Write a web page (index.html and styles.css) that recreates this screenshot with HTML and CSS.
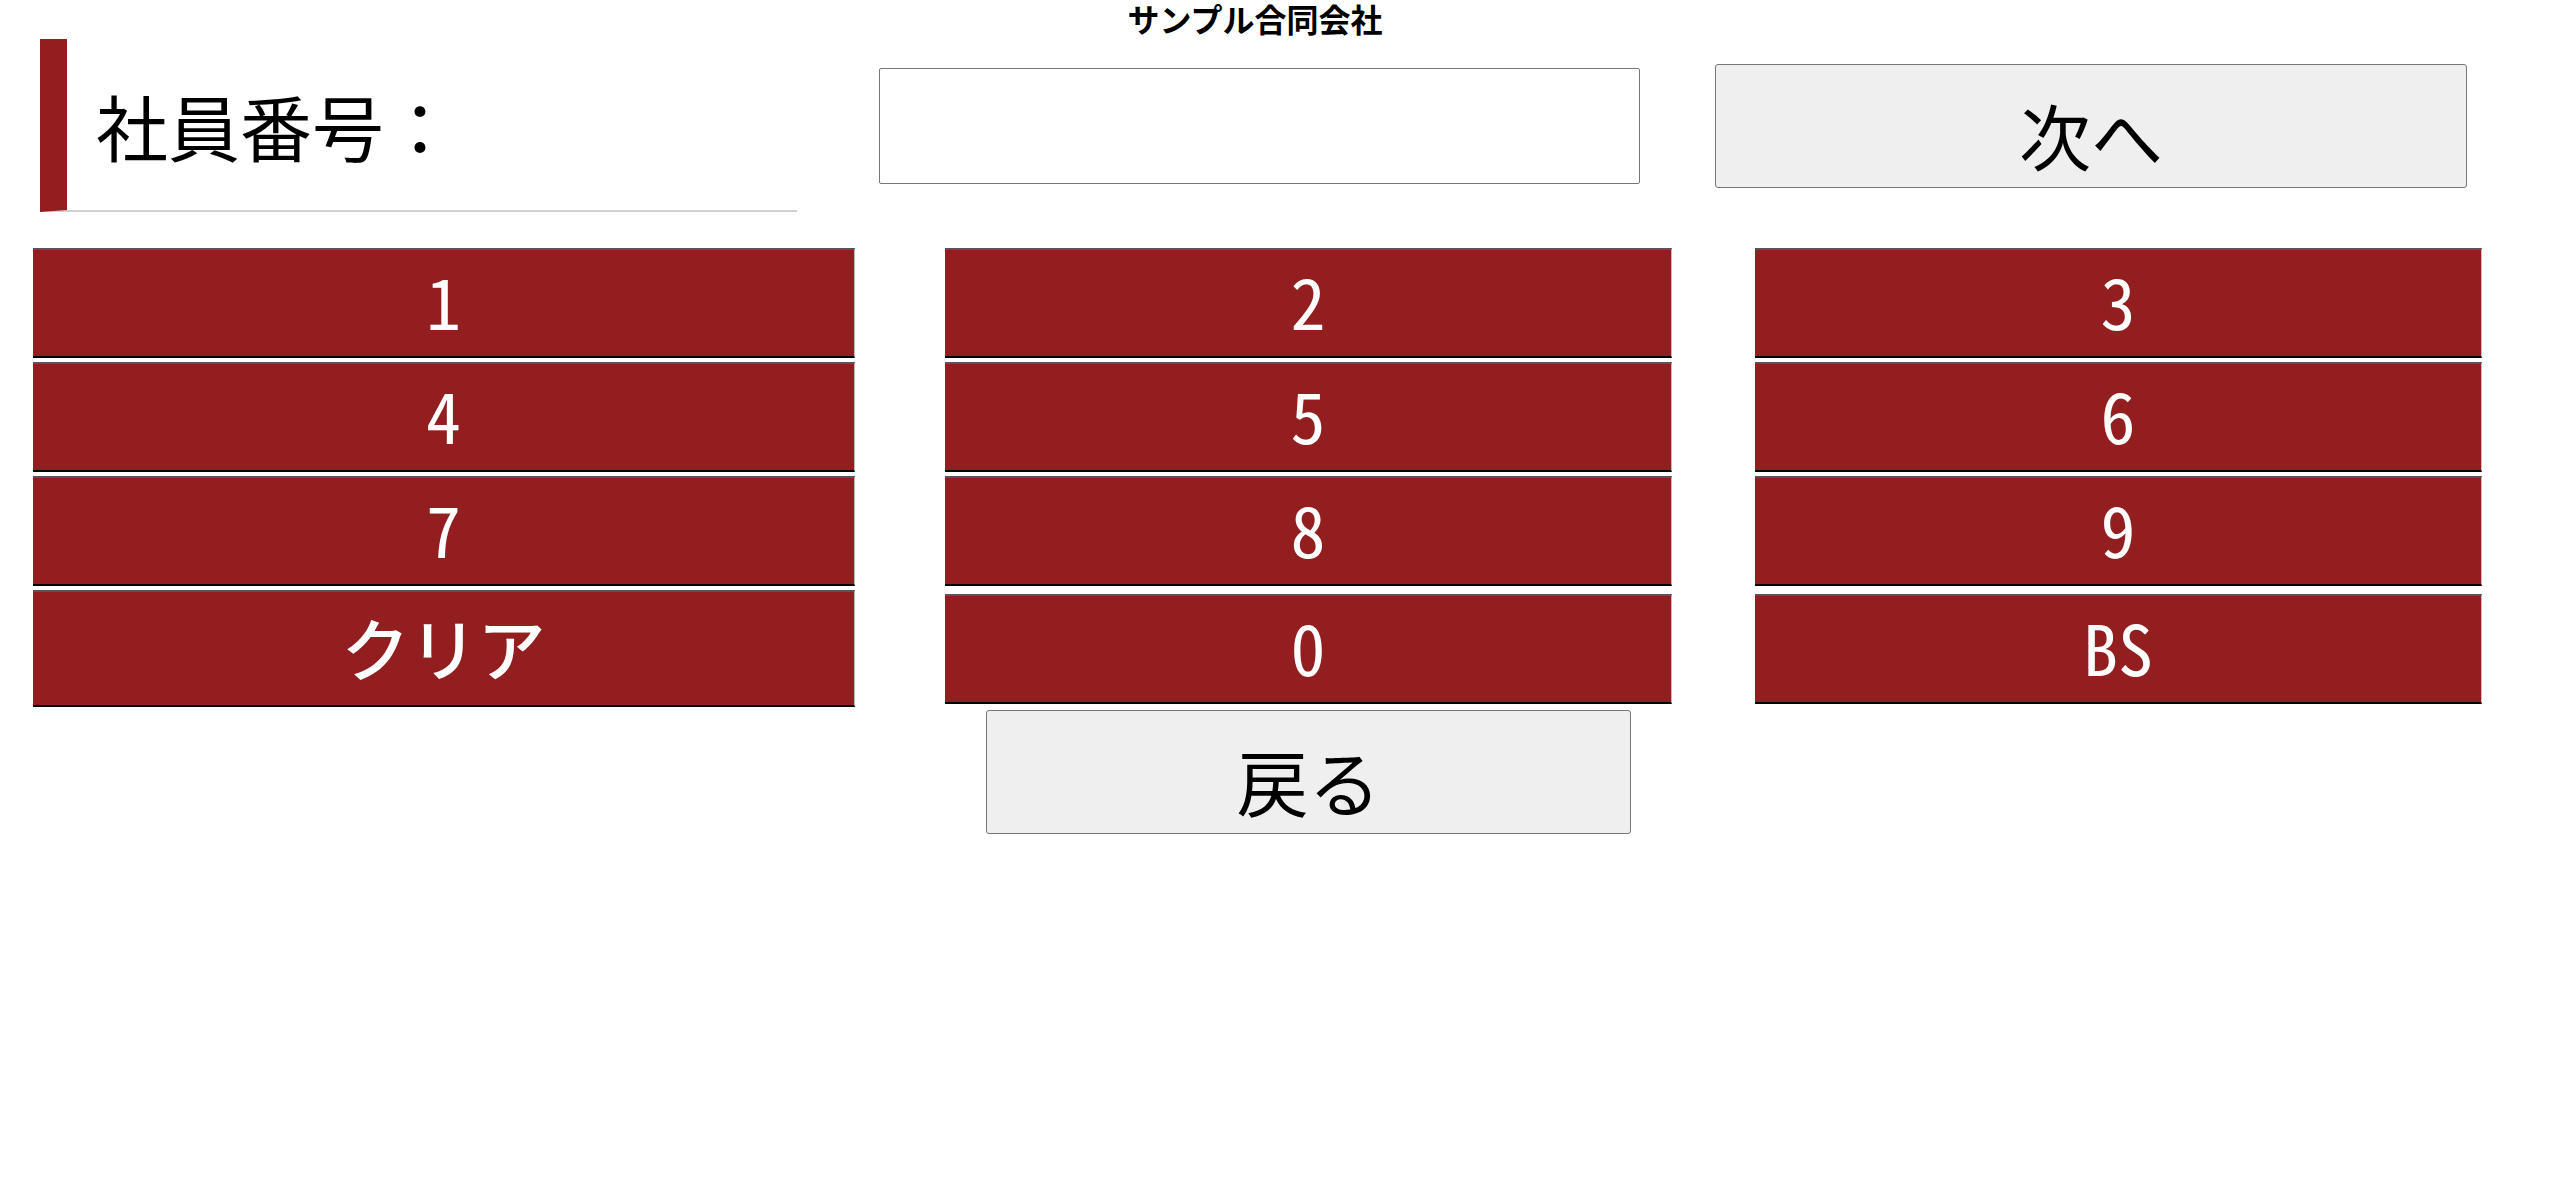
FILE: index.html
```html
<!DOCTYPE html>
<html lang="ja">
<head>
<meta charset="utf-8">
<title>社員番号入力</title>
<link rel="stylesheet" href="styles.css">
</head>
<body>
<div class="page">
  <div class="company">サンプル合同会社</div>
  <div class="top-row">
    <h1 class="label">社員番号：</h1>
    <input class="id-input" type="text">
    <button class="gray-btn next-btn">次へ</button>
  </div>
  <div class="keypad">
    <button class="key">1</button>
    <button class="key">2</button>
    <button class="key">3</button>
    <button class="key">4</button>
    <button class="key">5</button>
    <button class="key">6</button>
    <button class="key">7</button>
    <button class="key">8</button>
    <button class="key">9</button>
    <button class="key key-clear">クリア</button>
    <button class="key">0</button>
    <button class="key">BS</button>
    <button class="gray-btn back-btn">戻る</button>
  </div>
</div>
</body>
</html>
```
FILE: styles.css
```css
html, body {
  margin: 0;
  padding: 0;
  background: #ffffff;
}
body {
  font-family: "Noto Sans CJK JP", "Noto Sans", sans-serif;
  color: #000;
}
.page {
  width: 2510px;
}
.company {
  text-align: center;
  font-size: 32px;
  font-weight: bold;
  line-height: 32px;
  padding-top: 2px;
  height: 34px;
}
.top-row {
  display: flex;
  align-items: center;
  margin-top: 3px;
}
.label {
  box-sizing: border-box;
  margin: 0 0 0 40px;
  width: 757px;
  height: 173px;
  border-left: 27px solid #921e1f;
  border-bottom: 2px solid #d0d0d0;
  padding-left: 29px;
  display: flex;
  align-items: center;
  font-size: 72px;
  font-weight: normal;
  line-height: 1;
}
.id-input {
  box-sizing: border-box;
  margin: 0 0 0 82px;
  width: 761px;
  height: 116px;
  border: 1px solid #767676;
  border-radius: 2px;
  padding: 0 10px;
  font-size: 60px;
  font-family: inherit;
}
.gray-btn {
  box-sizing: border-box;
  background: #efefef;
  border: 1px solid #767676;
  border-radius: 3px;
  font-family: "Noto Sans CJK JP", sans-serif;
  font-size: 72px;
  line-height: 1;
  color: #000;
  padding: 16px 0 0 0;
  margin: 0;
}
.next-btn {
  margin-left: 75px;
  width: 752px;
  height: 124px;
}
.keypad {
  display: grid;
  grid-template-columns: 822px 90px 727px 83px 727px;
  grid-template-rows: 110px 110px 110px 117px auto;
  row-gap: 4px;
  margin: 36px 0 0 33px;
  align-items: center;
}
.key {
  box-sizing: border-box;
  height: 110px;
  margin: 0;
  padding: 0 0 6px 0;
  background: #921e1f;
  color: #ffffff;
  border: 0;
  border-top: 2px solid #555555;
  border-bottom: 2px solid #000000;
  border-right: 1px solid #bdbdbd;
  font-family: "Liberation Sans Narrow", "Noto Sans Mono CJK JP", "Noto Sans CJK JP", sans-serif;
  font-size: 70px;
  line-height: 1;
}
.key:nth-child(3n+1) {
  grid-column: 1;
}
.key:nth-child(3n+2) {
  grid-column: 3;
}
.key:nth-child(3n) {
  grid-column: 5;
}
.key-clear {
  height: 117px;
  padding: 0 0 4px 0;
  font-family: "Noto Sans CJK JP", sans-serif;
  font-size: 68px;
  font-weight: 500;
}
.back-btn {
  grid-column: 3;
  justify-self: center;
  width: 645px;
  height: 124px;
  margin-top: -1px;
}
```
